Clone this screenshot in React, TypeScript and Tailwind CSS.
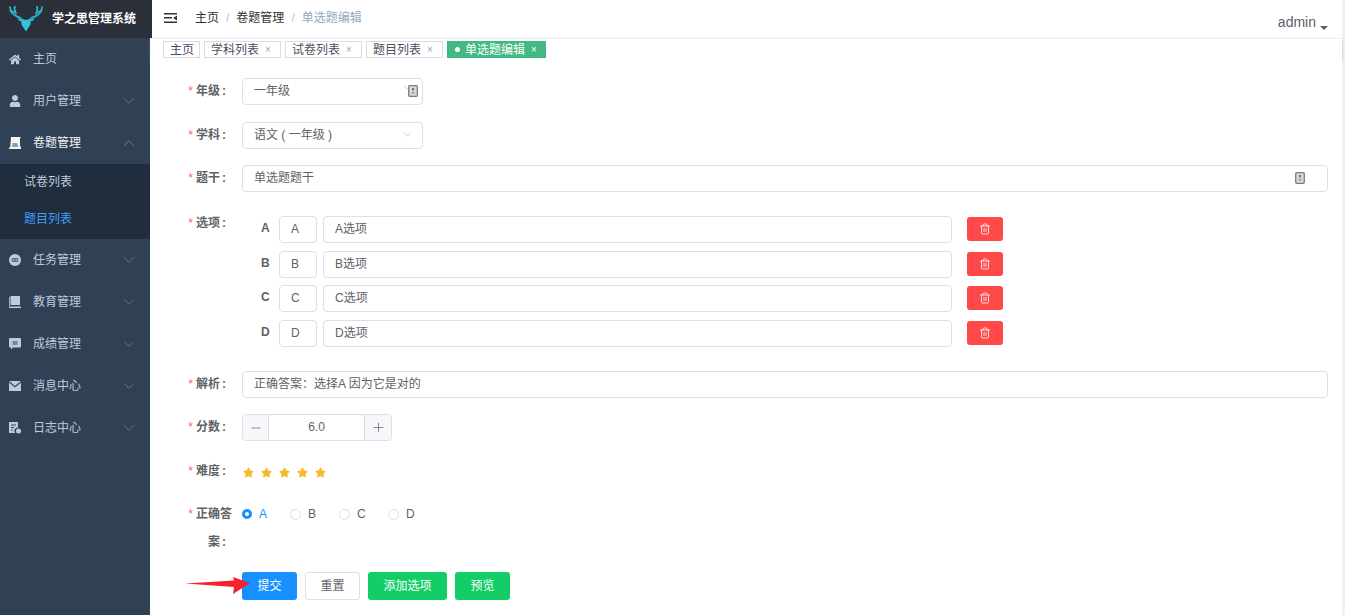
import { ReactNode } from "react";
import { ChevronDown, ChevronUp, Minus, Plus, Trash2 } from "lucide-react";
import { FaHome, FaUser, FaStar } from "react-icons/fa";

const FONT = "[font-family:'Liberation_Sans','Noto_Sans_CJK_SC',sans-serif]";

function DeerLogo() {
  return (
    <svg width="34" height="26" viewBox="0 0 34 26" fill="none">
      <g stroke="#2fb8d0" strokeWidth="1.7" strokeLinecap="round">
        <path d="M1 1c0 5 4 9 11 11" />
        <path d="M33 1c0 5-4 9-11 11" />
        <path d="M6 0.500c-1 2 0 5 1 7" />
        <path d="M28 0.500c1 2 0 5-1 7" />
        <path d="M1.500 5l4 1" />
        <path d="M32.500 5l-4 1" />
      </g>
      <path d="M12 12.500l5 1.500 5-1.500-0.500 6-4.500 7-4.500-7z" fill="#35c2dc" />
      <path d="M8 12l5 1.500-2 2z M26 12l-5 1.500 2 2z" fill="#35c2dc" />
    </svg>
  );
}

function ScrollIcon() {
  return (
    <svg width="12" height="12" viewBox="0 0 12 12" fill="currentColor">
      <path d="M2 0h10l-1 1v8.500H12V12H0v-1.500h1.200zM3.500 6.500v1h5v-1zM3 8.500v1h6v-1z" fillRule="evenodd" />
    </svg>
  );
}

function TaskIcon() {
  return (
    <svg width="12" height="12" viewBox="0 0 12 12">
      <circle cx="6" cy="6" r="6" fill="currentColor" />
      <rect x="2.800" y="4" width="6.400" height="4" rx="1" fill="#304156" opacity="0.7" />
      <circle cx="4.700" cy="6" r="0.800" fill="currentColor" />
      <circle cx="7.300" cy="6" r="0.800" fill="currentColor" />
    </svg>
  );
}

function BookIcon() {
  return (
    <svg width="12" height="12" viewBox="0 0 12 12" fill="currentColor">
      <path d="M1.500 0h9.500v9H1.500zM0 10.500h12V12H0z M0 1h0.800v9H0z" />
    </svg>
  );
}

function ChatIcon() {
  return (
    <svg width="12" height="12" viewBox="0 0 12 12" fill="currentColor">
      <path
        d="M1 0h10a1 1 0 0 1 1 1v7.500a1 1 0 0 1-1 1H4L2 11.500V9.500H1a1 1 0 0 1-1-1V1a1 1 0 0 1 1-1zM3.500 3.500v1h5v-1zM3.500 5.500v1h5v-1z"
        fillRule="evenodd"
      />
    </svg>
  );
}

function MailIcon() {
  return (
    <svg width="12" height="10" viewBox="0 0 12 10" fill="currentColor">
      <path d="M0 0l6 5 6-5zM0 1.500V10h12V1.500L6 6.500z" />
    </svg>
  );
}

function LogIcon() {
  return (
    <svg width="12" height="12" viewBox="0 0 12 12" fill="currentColor">
      <path
        d="M0 0h9v5.500a3.500 3.500 0 0 0-3 5.500H0zM2 2.500v1h5v-1zM2 5v1h3v-1zM2 7.500v1h2v-1z"
        fillRule="evenodd"
      />
      <circle cx="9.500" cy="9" r="2.500" />
    </svg>
  );
}

function ClipIcon({ tail = false }: { tail?: boolean }) {
  return (
    <svg width={tail ? 14 : 10} height="12" viewBox={tail ? "-4 0 14 12" : "0 0 10 12"}>
      {tail && <path d="M-4 1l4 3" stroke="#c4c4c4" strokeWidth="0.800" />}
      <rect x="0.700" y="0.700" width="8.600" height="10.600" rx="1" fill="#d8d8d8" stroke="#7d7d7d" strokeWidth="1.300" />
      <rect x="4" y="3" width="2" height="2.500" fill="#777" />
      <rect x="3.500" y="7" width="3" height="1.500" fill="#999" />
    </svg>
  );
}

type MenuEntry = {
  label: string;
  icon: ReactNode;
  arrow?: boolean;
};

const topMenu: MenuEntry[] = [
  { label: "主页", icon: <FaHome size={13} /> },
  { label: "用户管理", icon: <FaUser size={12} />, arrow: true },
];

const bottomMenu: MenuEntry[] = [
  { label: "任务管理", icon: <TaskIcon />, arrow: true },
  { label: "教育管理", icon: <BookIcon />, arrow: true },
  { label: "成绩管理", icon: <ChatIcon />, arrow: true },
  { label: "消息中心", icon: <MailIcon />, arrow: true },
  { label: "日志中心", icon: <LogIcon />, arrow: true },
];

function MenuItem({ item }: { item: MenuEntry }) {
  return (
    <div className="flex h-[42px] items-center pl-[9px] pr-[12px] text-xs text-[#bfcbd9]">
      <span className="flex w-3 justify-center">{item.icon}</span>
      <span className="ml-3 flex-1">{item.label}</span>
      {item.arrow && <ChevronDown size={18} strokeWidth={1.1} className="text-[#6f7d90]" />}
    </div>
  );
}

function Sidebar() {
  return (
    <aside className="flex h-full w-[150px] shrink-0 flex-col bg-[#304156]">
      <div className="relative z-10 flex h-[38px] w-[152px] shrink-0 items-center bg-[#2b2f3a] pl-[9px]">
        <DeerLogo />
        <span className="ml-[9px] text-xs font-bold text-white">学之思管理系统</span>
      </div>
      {topMenu.map((item) => (
        <MenuItem key={item.label} item={item} />
      ))}
      <div className="flex h-[42px] items-center pl-[9px] pr-[12px] text-xs text-[#f4f4f5]">
        <span className="flex w-3 justify-center">
          <ScrollIcon />
        </span>
        <span className="ml-3 flex-1">卷题管理</span>
        <ChevronUp size={18} strokeWidth={1.1} className="text-[#7f8b9b]" />
      </div>
      <div className="bg-[#1f2d3d] pb-[1px] text-xs">
        <div className="flex h-[35px] items-center pl-6 text-[#bfcbd9]">试卷列表</div>
        <div className="flex h-[39px] items-center pl-6 text-[#409eff]">题目列表</div>
      </div>
      {bottomMenu.map((item) => (
        <MenuItem key={item.label} item={item} />
      ))}
    </aside>
  );
}

function Tag({ label, closable = true }: { label: string; closable?: boolean }) {
  return (
    <div
      className={`flex h-[17px] items-center border border-[#d8dce5] bg-white pl-[6px] text-xs text-[#495060] ${
        closable ? "pr-[10px]" : "pr-[5px]"
      }`}
    >
      {label}
      {closable && <span className="ml-[6px] w-[5px] text-[10px] leading-none text-[#a0a4ac]">×</span>}
    </div>
  );
}

function Topbar() {
  return (
    <header className="shrink-0">
      <div className="flex h-[38px] items-center bg-white pb-[2px] pl-[14px] pr-[14px] text-xs">
        <svg width="13" height="10" viewBox="0 0 13 10" fill="#333">
          <path d="M0 0h13v1.500H0zM0 4h8v1.500H0zM0 8.500h13V10H0zM13 2.500v5L9 5z" />
        </svg>
        <span className="ml-[18px] text-[#303133]">主页</span>
        <span className="mx-[7px] text-[#c0c4cc]">/</span>
        <span className="text-[#303133]">卷题管理</span>
        <span className="mx-[7px] text-[#c0c4cc]">/</span>
        <span className="text-[#97a8be]">单选题编辑</span>
        <span className="ml-auto mt-[8px] flex items-end text-sm text-[#5a5e66]">
          admin
          <span className="mb-[2px] ml-[4px] h-0 w-0 border-x-[4px] border-t-[4px] border-x-transparent border-t-[#5a5e66]" />
        </span>
      </div>
      <div className="flex h-[22px] gap-[4px] border-t border-[#eef0f3] bg-white pl-[13px] pt-[2px] shadow-[0_2px_3px_rgba(120,130,160,0.45)]">
        <Tag label="主页" closable={false} />
        <Tag label="学科列表" />
        <Tag label="试卷列表" />
        <Tag label="题目列表" />
        <div className="flex h-[17px] items-center bg-[#42b983] pl-[8px] pr-[10px] text-xs text-white">
          <span className="mr-[5px] h-[5px] w-[5px] rounded-full bg-white" />
          单选题编辑
          <span className="ml-[6px] w-[5px] text-[10px] leading-none">×</span>
        </div>
      </div>
    </header>
  );
}

function FieldLabel({ children, lift = false }: { children: ReactNode; lift?: boolean }) {
  return (
    <label
      className={`flex w-[92px] shrink-0 justify-end pr-4 text-xs font-bold leading-[27px] text-[#606266] ${
        lift ? "-mt-[6px]" : ""
      }`}
    >
      <span className="mr-[3px] font-normal text-[#f56c6c]">*</span>
      <span className="w-[30px] whitespace-nowrap">
        {children}
        <span className="ml-[2px]">:</span>
      </span>
    </label>
  );
}

function TextBox({ children, className = "" }: { children: ReactNode; className?: string }) {
  return (
    <div
      className={`flex h-[27px] items-center rounded border border-[#dcdfe6] bg-white px-[11px] pb-[2px] text-xs text-[#606266] ${className}`}
    >
      {children}
    </div>
  );
}

const options = [
  { key: "A", mb: "mb-2" },
  { key: "B", mb: "mb-[7px]" },
  { key: "C", mb: "mb-2" },
  { key: "D", mb: "" },
];

const radios = ["A", "B", "C", "D"];

function ArrowMark() {
  return (
    <svg className="absolute left-[-57px] top-[5px] z-10" width="65" height="18" viewBox="0 0 65 18" fill="#f5222d">
      <path d="M0 6.500 L49 3.500 L48 0 L65 6 L48 17 L49 10z" />
    </svg>
  );
}

function EditForm() {
  return (
    <form className="min-h-0 flex-1 bg-white pr-[14px] pt-[18px]">
      <div className="mb-[17px] flex">
        <FieldLabel>年级</FieldLabel>
        <TextBox className="w-[181px] justify-between pr-[4px]">
          一年级
          <ClipIcon tail />
        </TextBox>
      </div>
      <div className="mb-4 flex">
        <FieldLabel>学科</FieldLabel>
        <TextBox className="w-[181px] justify-between pr-[8px]">
          语文 ( 一年级 )
          <ChevronDown size={13} strokeWidth={1} className="text-[#a0a4ac]" />
        </TextBox>
      </div>
      <div className="mb-[24px] flex">
        <FieldLabel>题干</FieldLabel>
        <TextBox className="flex-1 justify-between pr-[22px]">
          单选题题干
          <ClipIcon />
        </TextBox>
      </div>
      <div className="mb-[24px] flex">
        <FieldLabel lift>选项</FieldLabel>
        <div className="flex-1">
          {options.map((o) => (
            <div key={o.key} className={`flex items-start ${o.mb}`}>
              <span className="ml-[19px] w-[18px] text-xs font-bold leading-[25px] text-[#606266]">{o.key}</span>
              <TextBox className="w-[38px]">{o.key}</TextBox>
              <TextBox className="ml-[6px] w-[629px]">{o.key}选项</TextBox>
              <button
                type="button"
                className="ml-[15px] mt-[1px] flex h-[24px] w-[36px] items-center justify-center rounded-[3px] bg-[#ff4949] text-white"
              >
                <Trash2 size={12} strokeWidth={1.6} />
              </button>
            </div>
          ))}
        </div>
      </div>
      <div className="mb-4 flex">
        <FieldLabel>解析</FieldLabel>
        <TextBox className="flex-1">正确答案：选择A 因为它是对的</TextBox>
      </div>
      <div className="mb-[17px] flex">
        <FieldLabel>分数</FieldLabel>
        <div className="flex h-[27px] w-[150px] items-stretch rounded border border-[#dcdfe6] text-xs text-[#606266]">
          <span className="flex w-[25px] items-center justify-center rounded-l bg-[#f5f7fa]">
            <Minus size={14} strokeWidth={1.2} />
          </span>
          <span className="flex flex-1 items-center justify-center border-x border-[#dcdfe6] pb-[1px]">6.0</span>
          <span className="flex w-[26px] items-center justify-center rounded-r bg-[#f5f7fa]">
            <Plus size={15} strokeWidth={1.2} />
          </span>
        </div>
      </div>
      <div className="mb-[14px] flex">
        <FieldLabel>难度</FieldLabel>
        <div className="mt-[8px] flex h-[20px] gap-[7px] pl-[1px] text-[#f7ba2a]">
          {[1, 2, 3, 4, 5].map((n) => (
            <FaStar key={n} size={11} className="mt-[1px]" />
          ))}
        </div>
      </div>
      <div className="mb-4 flex">
        <label className="flex w-[92px] shrink-0 justify-end pr-4 text-xs font-bold leading-[28px] text-[#606266]">
          <span className="mr-[3px] font-normal text-[#f56c6c]">*</span>
          <span className="w-[30px]">
            <span className="block whitespace-nowrap">正确答</span>
            <span className="block text-right">
              案<span className="ml-[2px]">:</span>
            </span>
          </span>
        </label>
        <div className="flex h-[28px] items-center text-xs text-[#606266]">
          {radios.map((r, i) =>
            i === 0 ? (
              <span key={r} className="flex w-[48px] items-center text-[#1890ff]">
                <span className="mr-[7px] flex h-[10px] w-[10px] items-center justify-center rounded-full bg-[#1890ff]">
                  <span className="h-[4px] w-[4px] rounded-full bg-white" />
                </span>
                {r}
              </span>
            ) : (
              <span key={r} className="flex w-[49px] items-center">
                <span className="mr-[7px] h-[11px] w-[11px] rounded-full border border-[#dcdfe6] bg-white" />
                {r}
              </span>
            )
          )}
        </div>
      </div>
      <div className="flex pl-[92px]">
        <div className="relative">
          <ArrowMark />
          <button type="button" className="h-[28px] w-[55px] rounded-[3px] bg-[#1890ff] text-xs text-white">
            提交
          </button>
        </div>
        <button
          type="button"
          className="ml-2 h-[28px] w-[55px] rounded-[3px] border border-[#dcdfe6] bg-white text-xs text-[#606266]"
        >
          重置
        </button>
        <button type="button" className="ml-2 h-[28px] w-[79px] rounded-[3px] bg-[#13ce66] text-xs text-white">
          添加选项
        </button>
        <button type="button" className="ml-2 h-[28px] w-[55px] rounded-[3px] bg-[#13ce66] text-xs text-white">
          预览
        </button>
      </div>
    </form>
  );
}

export default function App() {
  return (
    <div className={`flex h-[615px] w-[1345px] overflow-hidden ${FONT}`}>
      <Sidebar />
      <main className="flex min-w-0 flex-1 flex-col border-r-[3px] border-[#f1f1f1] bg-white">
        <Topbar />
        <EditForm />
      </main>
    </div>
  );
}
